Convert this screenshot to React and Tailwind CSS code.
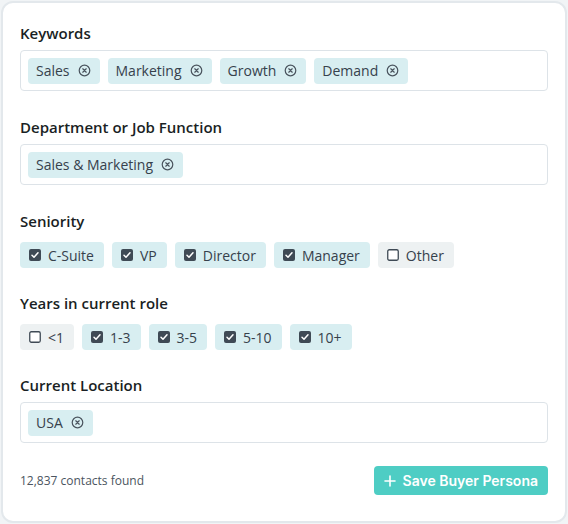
import { useState } from 'react';

const font = { fontFamily: '"Open Sans", "Liberation Sans", sans-serif' };

const XCircle = () => (
  <svg width="13" height="13" viewBox="0 0 16 16" fill="none" stroke="currentColor" strokeWidth="1.5" strokeLinecap="round">
    <circle cx="8" cy="8" r="6.5" />
    <path d="M5.9 5.9l4.2 4.2M10.1 5.9l-4.2 4.2" />
  </svg>
);

const Check = ({ on }) =>
  on ? (
    <svg width="12" height="12" viewBox="0 0 12 12">
      <rect x="0" y="0" width="12" height="12" rx="2" fill="#3f4a55" />
      <path d="M3 6.2l2 2 4-4.4" fill="none" stroke="#fff" strokeWidth="1.5" strokeLinecap="round" strokeLinejoin="round" />
    </svg>
  ) : (
    <svg width="12" height="12" viewBox="0 0 12 12">
      <rect x="0.75" y="0.75" width="10.5" height="10.5" rx="1.5" fill="#fff" stroke="#3f4a55" strokeWidth="1.3" />
    </svg>
  );

const Tag = ({ label, onRemove }) => (
  <span className="flex items-center h-[26px] pl-2 pr-[9px] gap-[8px] rounded bg-[#d8eef1] text-[14px] text-[#36414c]">
    {label}
    <button onClick={onRemove} className="text-[#4a545e]"><XCircle /></button>
  </span>
);

const TagBox = ({ tags, setTags }) => (
  <div className="flex items-center gap-2 h-[41px] px-[7px] rounded border border-[#dde3e8] bg-white">
    {tags.map(t => <Tag key={t} label={t} onRemove={() => setTags(tags.filter(x => x !== t))} />)}
  </div>
);

const Chip = ({ label, on, onToggle }) => (
  <button
    onClick={onToggle}
    className={`flex items-center h-[26px] pl-[9px] pr-[10px] gap-[7px] rounded text-[14px] text-[#36414c] ${on ? 'bg-[#d8eef1]' : 'bg-[#edf1f2]'}`}
  >
    <Check on={on} />
    {label}
  </button>
);

const ChipRow = ({ items, value, setValue }) => (
  <div className="flex gap-2 mt-[4px] -mb-px">
    {items.map(i => (
      <Chip key={i} label={i} on={value.includes(i)} onToggle={() => setValue(value.includes(i) ? value.filter(x => x !== i) : [...value, i])} />
    ))}
  </div>
);

const Section = ({ title, children }) => (
  <div className="flex flex-col gap-[6px]">
    <div className="text-[15px] font-semibold leading-5 -mt-px mb-px text-[#1a1f24]">{title}</div>
    {children}
  </div>
);

export default function App() {
  const [keywords, setKeywords] = useState(['Sales', 'Marketing', 'Growth', 'Demand']);
  const [depts, setDepts] = useState(['Sales & Marketing']);
  const [seniority, setSeniority] = useState(['C-Suite', 'VP', 'Director', 'Manager']);
  const [years, setYears] = useState(['1-3', '3-5', '5-10', '10+']);
  const [locations, setLocations] = useState(['USA']);

  return (
    <div className="w-[568px] h-[524px] p-px bg-[#f1f4f6]" style={font}>
      <div className="h-full rounded-xl border-2 border-[#e3e8ec] bg-white pt-[21px] px-[17px] flex flex-col gap-[27px]">
        <Section title="Keywords"><TagBox tags={keywords} setTags={setKeywords} /></Section>
        <Section title="Department or Job Function"><TagBox tags={depts} setTags={setDepts} /></Section>
        <Section title="Seniority">
          <ChipRow items={['C-Suite', 'VP', 'Director', 'Manager', 'Other']} value={seniority} setValue={setSeniority} />
        </Section>
        <Section title="Years in current role">
          <ChipRow items={['<1', '1-3', '3-5', '5-10', '10+']} value={years} setValue={setYears} />
        </Section>
        <Section title="Current Location"><TagBox tags={locations} setTags={setLocations} /></Section>
        <div className="flex items-center justify-between -mt-[4px]">
          <span className="text-[12px] text-[#4b5560]">12,837 contacts found</span>
          <button
            className="flex items-center gap-[7px] h-[29px] pl-[10px] pr-[10px] rounded bg-[#4ecdc4] text-white text-[14px] font-semibold"
            style={{ fontFamily: 'Inter, "Liberation Sans", sans-serif' }}
          >
            <svg width="12" height="12" viewBox="0 0 12 12" stroke="currentColor" strokeWidth="1.6" strokeLinecap="round">
              <path d="M6 1v10M1 6h10" />
            </svg>
            Save Buyer Persona
          </button>
        </div>
      </div>
    </div>
  );
}
